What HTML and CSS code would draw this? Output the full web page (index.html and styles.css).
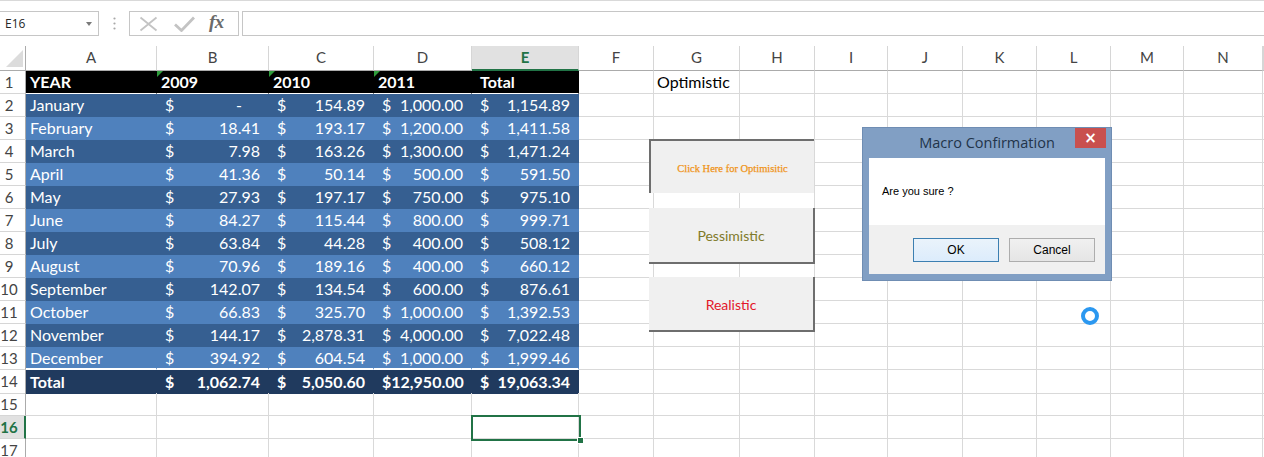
FILE: index.html
```html
<!DOCTYPE html>
<html>
<head>
<meta charset="utf-8">
<title>Macro Confirmation</title>
<link rel="stylesheet" href="styles.css">
</head>
<body>
<div class="topline"></div>
<div class="fbar">
  <div class="namebox"><span>E16</span><span class="caret"></span></div>
  <div class="grip"><svg width="3" height="13" viewBox="0 0 3 13"><circle cx="1.5" cy="1.5" r="1.1" fill="#a8a8a8"/><circle cx="1.5" cy="6.5" r="1.1" fill="#a8a8a8"/><circle cx="1.5" cy="11.5" r="1.1" fill="#a8a8a8"/></svg></div>
  <div class="fxbox">
    <svg class="ico-x" width="19" height="16" viewBox="0 0 19 16"><path d="M1.5 1.5 L17.5 14.5 M17.5 1.5 L1.5 14.5" stroke="#c3c3c3" stroke-width="1.8" fill="none"/></svg>
    <svg class="ico-ok" width="21" height="16" viewBox="0 0 21 16"><path d="M1 8.5 L7.5 14.5 L20 1.5" stroke="#c3c3c3" stroke-width="2.8" fill="none"/></svg>
    <span class="fx">fx</span>
  </div>
  <div class="finput"></div>
</div>

<div class="sheet">
  <div class="row colhead">
    <div class="ch corner"><svg width="17" height="17" viewBox="0 0 17 17"><polygon points="17,0 17,17 0,17" fill="#dcdcdc"/></svg></div>
    <div class="ch">A</div><div class="ch">B</div><div class="ch">C</div><div class="ch">D</div><div class="ch sel">E</div><div class="ch">F</div><div class="ch">G</div><div class="ch">H</div><div class="ch">I</div><div class="ch">J</div><div class="ch">K</div><div class="ch">L</div><div class="ch">M</div><div class="ch">N</div><div class="ch"></div>
  </div>

  <div class="row">
    <div class="rh">1</div>
    <div class="c bh">YEAR</div><div class="c bh yr flag">2009</div><div class="c bh yr flag">2010</div><div class="c bh yr flag">2011</div><div class="c bh tot">Total</div>
    <div class="c"></div><div class="c txt">Optimistic</div><div class="c"></div><div class="c"></div><div class="c"></div><div class="c"></div><div class="c"></div><div class="c"></div><div class="c"></div><div class="c"></div>
  </div>

  <div class="row">
    <div class="rh">2</div>
    <div class="c bd">January</div><div class="c bd m"><span>$</span><span class="dash">-</span></div><div class="c bd m"><span>$</span><span>154.89</span></div><div class="c bd m"><span>$</span><span>1,000.00</span></div><div class="c bd m"><span>$</span><span>1,154.89</span></div>
    <div class="c"></div><div class="c"></div><div class="c"></div><div class="c"></div><div class="c"></div><div class="c"></div><div class="c"></div><div class="c"></div><div class="c"></div><div class="c"></div>
  </div>

  <div class="row">
    <div class="rh">3</div>
    <div class="c bl">February</div><div class="c bl m"><span>$</span><span>18.41</span></div><div class="c bl m"><span>$</span><span>193.17</span></div><div class="c bl m"><span>$</span><span>1,200.00</span></div><div class="c bl m"><span>$</span><span>1,411.58</span></div>
    <div class="c"></div><div class="c"></div><div class="c"></div><div class="c"></div><div class="c"></div><div class="c"></div><div class="c"></div><div class="c"></div><div class="c"></div><div class="c"></div>
  </div>

  <div class="row">
    <div class="rh">4</div>
    <div class="c bd">March</div><div class="c bd m"><span>$</span><span>7.98</span></div><div class="c bd m"><span>$</span><span>163.26</span></div><div class="c bd m"><span>$</span><span>1,300.00</span></div><div class="c bd m"><span>$</span><span>1,471.24</span></div>
    <div class="c"></div><div class="c"></div><div class="c"></div><div class="c"></div><div class="c"></div><div class="c"></div><div class="c"></div><div class="c"></div><div class="c"></div><div class="c"></div>
  </div>

  <div class="row">
    <div class="rh">5</div>
    <div class="c bl">April</div><div class="c bl m"><span>$</span><span>41.36</span></div><div class="c bl m"><span>$</span><span>50.14</span></div><div class="c bl m"><span>$</span><span>500.00</span></div><div class="c bl m"><span>$</span><span>591.50</span></div>
    <div class="c"></div><div class="c"></div><div class="c"></div><div class="c"></div><div class="c"></div><div class="c"></div><div class="c"></div><div class="c"></div><div class="c"></div><div class="c"></div>
  </div>

  <div class="row">
    <div class="rh">6</div>
    <div class="c bd">May</div><div class="c bd m"><span>$</span><span>27.93</span></div><div class="c bd m"><span>$</span><span>197.17</span></div><div class="c bd m"><span>$</span><span>750.00</span></div><div class="c bd m"><span>$</span><span>975.10</span></div>
    <div class="c"></div><div class="c"></div><div class="c"></div><div class="c"></div><div class="c"></div><div class="c"></div><div class="c"></div><div class="c"></div><div class="c"></div><div class="c"></div>
  </div>

  <div class="row">
    <div class="rh">7</div>
    <div class="c bl">June</div><div class="c bl m"><span>$</span><span>84.27</span></div><div class="c bl m"><span>$</span><span>115.44</span></div><div class="c bl m"><span>$</span><span>800.00</span></div><div class="c bl m"><span>$</span><span>999.71</span></div>
    <div class="c"></div><div class="c"></div><div class="c"></div><div class="c"></div><div class="c"></div><div class="c"></div><div class="c"></div><div class="c"></div><div class="c"></div><div class="c"></div>
  </div>

  <div class="row">
    <div class="rh">8</div>
    <div class="c bd">July</div><div class="c bd m"><span>$</span><span>63.84</span></div><div class="c bd m"><span>$</span><span>44.28</span></div><div class="c bd m"><span>$</span><span>400.00</span></div><div class="c bd m"><span>$</span><span>508.12</span></div>
    <div class="c"></div><div class="c"></div><div class="c"></div><div class="c"></div><div class="c"></div><div class="c"></div><div class="c"></div><div class="c"></div><div class="c"></div><div class="c"></div>
  </div>

  <div class="row">
    <div class="rh">9</div>
    <div class="c bl">August</div><div class="c bl m"><span>$</span><span>70.96</span></div><div class="c bl m"><span>$</span><span>189.16</span></div><div class="c bl m"><span>$</span><span>400.00</span></div><div class="c bl m"><span>$</span><span>660.12</span></div>
    <div class="c"></div><div class="c"></div><div class="c"></div><div class="c"></div><div class="c"></div><div class="c"></div><div class="c"></div><div class="c"></div><div class="c"></div><div class="c"></div>
  </div>

  <div class="row">
    <div class="rh">10</div>
    <div class="c bd">September</div><div class="c bd m"><span>$</span><span>142.07</span></div><div class="c bd m"><span>$</span><span>134.54</span></div><div class="c bd m"><span>$</span><span>600.00</span></div><div class="c bd m"><span>$</span><span>876.61</span></div>
    <div class="c"></div><div class="c"></div><div class="c"></div><div class="c"></div><div class="c"></div><div class="c"></div><div class="c"></div><div class="c"></div><div class="c"></div><div class="c"></div>
  </div>

  <div class="row">
    <div class="rh">11</div>
    <div class="c bl">October</div><div class="c bl m"><span>$</span><span>66.83</span></div><div class="c bl m"><span>$</span><span>325.70</span></div><div class="c bl m"><span>$</span><span>1,000.00</span></div><div class="c bl m"><span>$</span><span>1,392.53</span></div>
    <div class="c"></div><div class="c"></div><div class="c"></div><div class="c"></div><div class="c"></div><div class="c"></div><div class="c"></div><div class="c"></div><div class="c"></div><div class="c"></div>
  </div>

  <div class="row">
    <div class="rh">12</div>
    <div class="c bd">November</div><div class="c bd m"><span>$</span><span>144.17</span></div><div class="c bd m"><span>$</span><span>2,878.31</span></div><div class="c bd m"><span>$</span><span>4,000.00</span></div><div class="c bd m"><span>$</span><span>7,022.48</span></div>
    <div class="c"></div><div class="c"></div><div class="c"></div><div class="c"></div><div class="c"></div><div class="c"></div><div class="c"></div><div class="c"></div><div class="c"></div><div class="c"></div>
  </div>

  <div class="row">
    <div class="rh">13</div>
    <div class="c bl last">December</div><div class="c bl last m"><span>$</span><span>394.92</span></div><div class="c bl last m"><span>$</span><span>604.54</span></div><div class="c bl last m"><span>$</span><span>1,000.00</span></div><div class="c bl last m"><span>$</span><span>1,999.46</span></div>
    <div class="c"></div><div class="c"></div><div class="c"></div><div class="c"></div><div class="c"></div><div class="c"></div><div class="c"></div><div class="c"></div><div class="c"></div><div class="c"></div>
  </div>

  <div class="row">
    <div class="rh">14</div>
    <div class="c bt">Total</div><div class="c bt m"><span>$</span><span>1,062.74</span></div><div class="c bt m"><span>$</span><span>5,050.60</span></div><div class="c bt m"><span>$12,950.00</span></div><div class="c bt m"><span>$</span><span>19,063.34</span></div>
    <div class="c"></div><div class="c"></div><div class="c"></div><div class="c"></div><div class="c"></div><div class="c"></div><div class="c"></div><div class="c"></div><div class="c"></div><div class="c"></div>
  </div>

  <div class="row">
    <div class="rh">15</div>
    <div class="c"></div><div class="c"></div><div class="c"></div><div class="c"></div><div class="c"></div>
    <div class="c"></div><div class="c"></div><div class="c"></div><div class="c"></div><div class="c"></div><div class="c"></div><div class="c"></div><div class="c"></div><div class="c"></div><div class="c"></div>
  </div>

  <div class="row">
    <div class="rh sel">16</div>
    <div class="c"></div><div class="c"></div><div class="c"></div><div class="c"></div><div class="c"></div>
    <div class="c"></div><div class="c"></div><div class="c"></div><div class="c"></div><div class="c"></div><div class="c"></div><div class="c"></div><div class="c"></div><div class="c"></div><div class="c"></div>
  </div>

  <div class="row">
    <div class="rh">17</div>
    <div class="c"></div><div class="c"></div><div class="c"></div><div class="c"></div><div class="c"></div>
    <div class="c"></div><div class="c"></div><div class="c"></div><div class="c"></div><div class="c"></div><div class="c"></div><div class="c"></div><div class="c"></div><div class="c"></div><div class="c"></div>
  </div>
</div>

<div class="selection"><span class="handle"></span></div>

<div class="btn btn-opt">Click Here for Optimisitic</div>
<div class="btn btn-pes">Pessimistic</div>
<div class="btn btn-real">Realistic</div>

<div class="dialog">
  <div class="dlg-title">Macro Confirmation</div>
  <div class="dlg-close">&#xD7;</div>
  <div class="dlg-client">
    <div class="dlg-msg">Are you sure ?</div>
    <div class="dlg-actions">
      <div class="dbtn dbtn-default">OK</div>
      <div class="dbtn">Cancel</div>
    </div>
  </div>
</div>

<div class="busy"></div>
</body>
</html>
```

FILE: styles.css
```css
* { box-sizing: border-box; }
html, body { margin: 0; padding: 0; background: #fff; }
body {
  width: 1264px;
  height: 457px;
  overflow: hidden;
  position: relative;
  font-family: Lato, "Liberation Sans", sans-serif;
  color: #000;
}

/* formula bar */
.topline { height: 1px; background: #d9d9d9; }
.fbar {
  display: flex;
  height: 25px;
  margin-top: 10px;
}
.namebox {
  width: 100px;
  margin-left: -1px;
  border: 1px solid #c6c6c6;
  display: flex;
  align-items: center;
  justify-content: space-between;
  padding: 0 6px 0 5px;
  font: 12px "Open Sans", sans-serif;
  color: #262626;
}
.caret {
  width: 0; height: 0;
  border-left: 3.5px solid transparent;
  border-right: 3.5px solid transparent;
  border-top: 4px solid #7a7a7a;
}
.grip { width: 30px; display: flex; align-items: center; justify-content: center; padding-left: 1px; }
.fxbox {
  width: 110px;
  border: 1px solid #c6c6c6;
  display: flex;
  align-items: center;
  padding-left: 9px;
}
.ico-x { margin-right: 16px; }
.ico-ok { margin-right: 14px; }
.fx {
  font: italic bold 19px "Liberation Serif", serif;
  color: #6a6a6a;
  letter-spacing: -0.5px;
  margin-top: -3px;
}
.finput { flex: 1; margin-left: 3px; border: 1px solid #c6c6c6; border-right: none; }

/* sheet grid */
.sheet { margin-top: 10px; }
.row {
  display: grid;
  grid-template-columns: 26px 131px 112px 105px 98px 107px 75px 86px 75px 73px 75px 74px 74px 73px 79px 1fr;
  height: 23px;
}
.row.colhead { height: 25px; }
.ch {
  border-right: 1px solid #d6d6d6;
  border-bottom: 1px solid #ababab;
  text-align: center;
  font-size: 15px;
  line-height: 23px;
  color: #444;
}
.ch.corner {
  border-right-color: #ababab;
  display: flex;
  align-items: flex-end;
  justify-content: flex-end;
  padding: 0 2px 3px 0;
}
.ch.sel {
  background: #e1e1e1;
  color: #217346;
  font-weight: bold;
  border-bottom: 2px solid #217346;
}
.rh {
  border-right: 1px solid #ababab;
  border-bottom: 1px solid #d6d6d6;
  font-size: 15px;
  line-height: 22px;
  color: #444;
  text-align: center;
  padding-right: 7px;
}
.rh.sel {
  background: #e1e1e1;
  color: #217346;
  font-weight: bold;
  border-right: 2px solid #217346;
  padding-right: 6px;
}
.c {
  border-right: 1px solid #d9d9d9;
  border-bottom: 1px solid #d9d9d9;
  font-size: 16px;
  line-height: 22px;
  padding: 0 4px;
  white-space: nowrap;
  position: relative;
}
.c.txt { padding-left: 3px; }

/* table styles */
.bh { background: #000; color: #fff; font-weight: bold; border-right-color: #000; border-bottom-color: #fff; }
.bh.yr { padding-left: 4px; }
.bh.tot { padding-left: 8px; }
.flag::before {
  content: "";
  position: absolute;
  left: 0; top: 0;
  border-top: 6px solid #2e9c3c;
  border-right: 6px solid transparent;
}
.bd { background: #365f91; color: #fff; border-color: #365f91; }
.bl { background: #4f81bd; color: #fff; border-color: #4f81bd; }
.bl.last { border-bottom: 2px solid #fff; line-height: 21px; }
.bt { background: #203a5e; color: #fff; font-weight: bold; border-color: #203a5e; line-height: 23px; }
.m {
  display: flex;
  justify-content: space-between;
  padding: 0 8px 0 8px;
}
.dash { padding-right: 18px; }

/* selected cell */
.selection {
  position: absolute;
  left: 471px; top: 415px;
  width: 110px; height: 26px;
  border: 2px solid #217346;
}
.handle {
  position: absolute;
  right: -5px; bottom: -5px;
  width: 7px; height: 7px;
  background: #217346;
  border: 1px solid #fff;
}

/* form buttons */
.btn {
  position: absolute;
  left: 649px;
  width: 166px;
  background: #f0f0f0;
  display: flex;
  align-items: center;
  justify-content: center;
  font-size: 14px;
}
.btn-opt {
  top: 139px; height: 54px; width: 165px;
  border-top: 2px solid #6e6e6e;
  border-left: 2px solid #6e6e6e;
  font: 10.5px "Liberation Serif", serif;
  color: #ef9419;
  padding-top: 2px;
  -webkit-text-stroke: 0.25px #ef9419;
}
.btn-pes {
  top: 208px; height: 56px;
  border-right: 2px solid #6e6e6e;
  border-bottom: 2px solid #6e6e6e;
  color: #7f7a2a;
  padding-top: 1px;
}
.btn-real {
  top: 277px; height: 55px;
  border-right: 2px solid #6e6e6e;
  border-bottom: 2px solid #6e6e6e;
  color: #e3162a;
  padding-top: 1px;
}

/* dialog */
.dialog {
  position: absolute;
  left: 862px; top: 127px;
  width: 250px; height: 154px;
  background: #819fc4;
  border: 1px solid #6f8db3;
  padding: 0 6px 6px 6px;
  display: flex;
  flex-direction: column;
}
.dlg-title {
  height: 30px;
  text-align: center;
  font: 14.5px "Open Sans", sans-serif;
  line-height: 30px;
  color: #22344a;
}
.dlg-close {
  position: absolute;
  right: 5px; top: 0;
  width: 31px; height: 20px;
  background: #c9504e;
  color: #fff;
  font: bold 15px "DejaVu Sans", sans-serif;
  line-height: 20px;
  display: flex;
  align-items: center;
  justify-content: center;
}
.dlg-client {
  flex: 1;
  background: #fff;
  display: flex;
  flex-direction: column;
}
.dlg-msg {
  height: 67px;
  padding: 27px 0 0 13px;
  font: 11px "Liberation Sans", sans-serif;
  color: #000;
}
.dlg-actions {
  flex: 1;
  background: #f0f0f0;
  display: flex;
  justify-content: flex-end;
  gap: 10px;
  padding: 13px 10px 0 0;
}
.dbtn {
  width: 86px; height: 24px;
  border: 1px solid #adadad;
  background: linear-gradient(#f0f0f0, #e5e5e5);
  font: 12px "Liberation Sans", sans-serif;
  display: flex;
  align-items: center;
  justify-content: center;
}
.dbtn-default { border-color: #3c7fb1; background: linear-gradient(#eaf3fb, #dcecfc); }

/* busy ring */
.busy {
  position: absolute;
  left: 1081px; top: 307px;
  width: 18px; height: 18px;
  border-radius: 50%;
  border: 4px solid #2b98f0;
}
```
